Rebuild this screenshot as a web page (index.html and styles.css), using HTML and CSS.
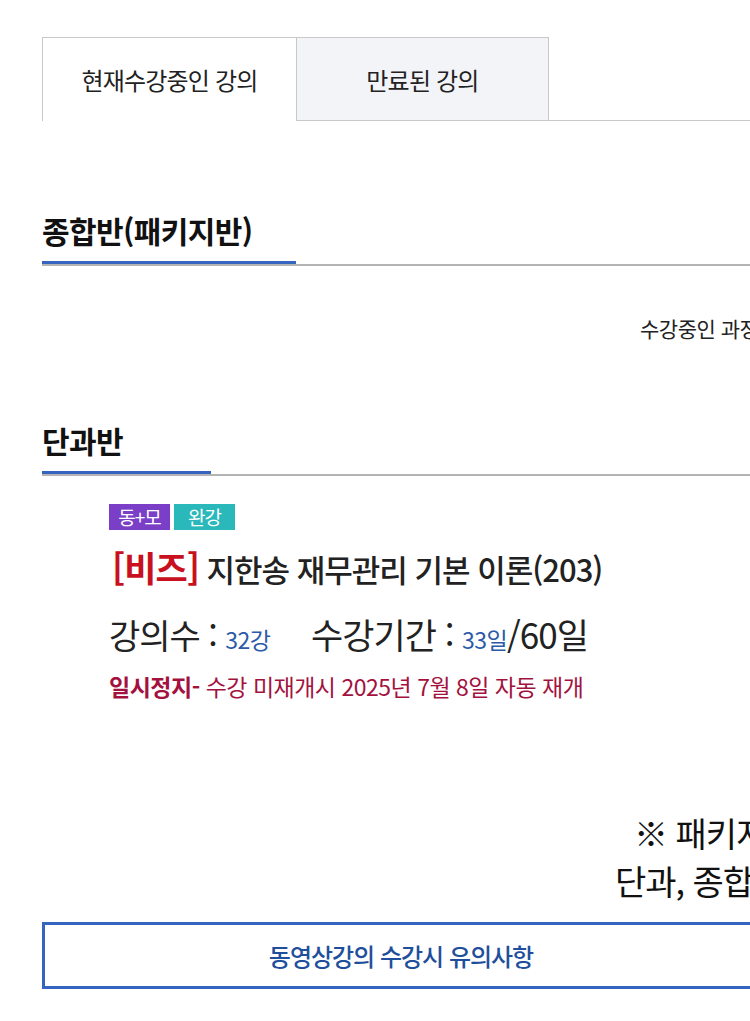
FILE: index.html
```html
<!DOCTYPE html>
<html lang="ko">
<head>
    <meta charset="UTF-8">
    <meta name="viewport" content="width=device-width, initial-scale=1.0">
    <title>내 강의실</title>
    <link rel="stylesheet" href="styles.css">
</head>
<body>

<div class="page">

    <!-- Tabs -->
    <div class="tabs">
        <div class="tab active">현재수강중인 강의</div>
        <div class="tab">만료된 강의</div>
        <div class="tab-rest"></div>
    </div>

    <!-- Package courses -->
    <div class="section">
        <h2 class="section-title">종합반(패키지반)</h2>
        <div class="section-line"><span class="line-blue wide"></span></div>
        <p class="empty-msg">수강중인 과정이 없습니다.</p>
    </div>

    <!-- Single courses -->
    <div class="section single">
        <h2 class="section-title">단과반</h2>
        <div class="section-line"><span class="line-blue narrow"></span></div>

        <div class="course">
            <div class="badges">
                <span class="badge purple">동+모</span>
                <span class="badge teal">완강</span>
            </div>
            <div class="course-title"><span class="cat">[비즈]</span> 지한송 재무관리 기본 이론(203)</div>
            <div class="course-info">
                <span class="label">강의수 :</span> <span class="num">32강</span>
                <span class="label gap">수강기간 :</span> <span class="num">33일</span><span class="label">/60일</span>
            </div>
            <div class="pause"><b>일시정지-</b> 수강 미재개시 2025년 7월 8일 자동 재개</div>
        </div>
    </div>

    <!-- Notice -->
    <div class="notice">
        <p class="notice-1">※ 패키지 강의는 종합반에서 확인하세요.</p>
        <p class="notice-2">단과, 종합반 강의는 수강기간 내에 수강하세요.</p>
    </div>

    <a href="#" class="guide-button">동영상강의 수강시 유의사항</a>

</div>

</body>
</html>
```

FILE: styles.css
```css
html, body {
    margin: 0;
    padding: 0;
    background: #fff;
    overflow: hidden;
}
body {
    width: 750px;
    height: 1021px;
    font-family: "Noto Sans CJK KR", "Noto Sans", sans-serif;
    color: #222;
}
.page {
    width: 1100px;
    padding: 37px 0 0 42px;
}

/* tabs */
.tabs {
    display: flex;
    height: 84px;
}
.tab {
    width: 254px;
    display: flex;
    align-items: center;
    justify-content: center;
    font-size: 24px;
    letter-spacing: -0.8px;
    color: #222;
    border: 1px solid #c8c8c8;
    border-right: none;
    background: #f2f4f8;
    box-sizing: border-box;
}
.tab.active {
    background: #fff;
    border-bottom: none;
}
.tab + .tab {
    width: 253px;
    border-right: 1px solid #c8c8c8;
}
.tab-rest {
    flex: 1;
    border-bottom: 1px solid #c8c8c8;
}

/* sections */
.section {
    margin-top: 89px;
}
.section.single {
    margin-top: 77px;
}
.section-title {
    margin: 0;
    font-size: 30px;
    font-weight: 700;
    letter-spacing: -0.6px;
    line-height: 40px;
    color: #111;
}
.section-line {
    margin-top: 11px;
    height: 3px;
    border-bottom: 2px solid #b4b4b4;
}
.line-blue {
    display: block;
    height: 3px;
    background: #3565be;
}
.line-blue.wide { width: 254px; }
.line-blue.narrow { width: 169px; }

.empty-msg {
    margin: 47px 0 0 598px;
    font-size: 21px;
    line-height: 30px;
    letter-spacing: -0.5px;
    color: #222;
}

/* course */
.course {
    padding: 28px 0 0 67px;
}
.badges {
    display: flex;
    gap: 4px;
}
.badge {
    width: 61px;
    height: 26px;
    line-height: 26px;
    text-align: center;
    color: #fff;
    font-size: 19px;
    letter-spacing: -1px;
}
.badge.purple { background: #7a3fc6; }
.badge.teal { background: #2bb8bb; }

.course-title {
    margin-top: 15px;
    font-size: 31px;
    font-weight: 500;
    letter-spacing: -1px;
    color: #222;
    line-height: 44px;
}
.course-title .cat {
    color: #c8101e;
    font-weight: 700;
    font-size: 35px;
    margin-left: 3px;
}
.course-info {
    margin-top: 21px;
    line-height: 44px;
}
.course-info .label {
    font-size: 34px;
    letter-spacing: -1px;
    color: #222;
}
.course-info .gap {
    margin-left: 36px;
}
.course-info .num {
    font-size: 23px;
    color: #2c5aa8;
    letter-spacing: -0.5px;
    margin-left: 4px;
}
.course-info .num + .label {
    font-size: 35px;
}
.pause {
    margin-top: 7px;
    font-size: 23px;
    line-height: 30px;
    letter-spacing: -0.5px;
    color: #a3123e;
}
.pause b {
    font-weight: 700;
}

/* notice */
.notice {
    margin-top: 108px;
}
.notice p {
    margin: 0;
    font-size: 34px;
    letter-spacing: -1px;
    color: #111;
    line-height: 48px;
    white-space: nowrap;
}
.notice-1 { padding-left: 592px; }
.notice-2 { padding-left: 573px; }

/* guide */
.guide-button {
    display: block;
    margin-top: 17px;
    width: 718px;
    height: 67px;
    line-height: 61px;
    box-sizing: border-box;
    border: 3px solid #3565be;
    text-align: center;
    font-size: 24px;
    font-weight: 500;
    letter-spacing: -1px;
    color: #1f4f9c;
    text-decoration: none;
}
```
